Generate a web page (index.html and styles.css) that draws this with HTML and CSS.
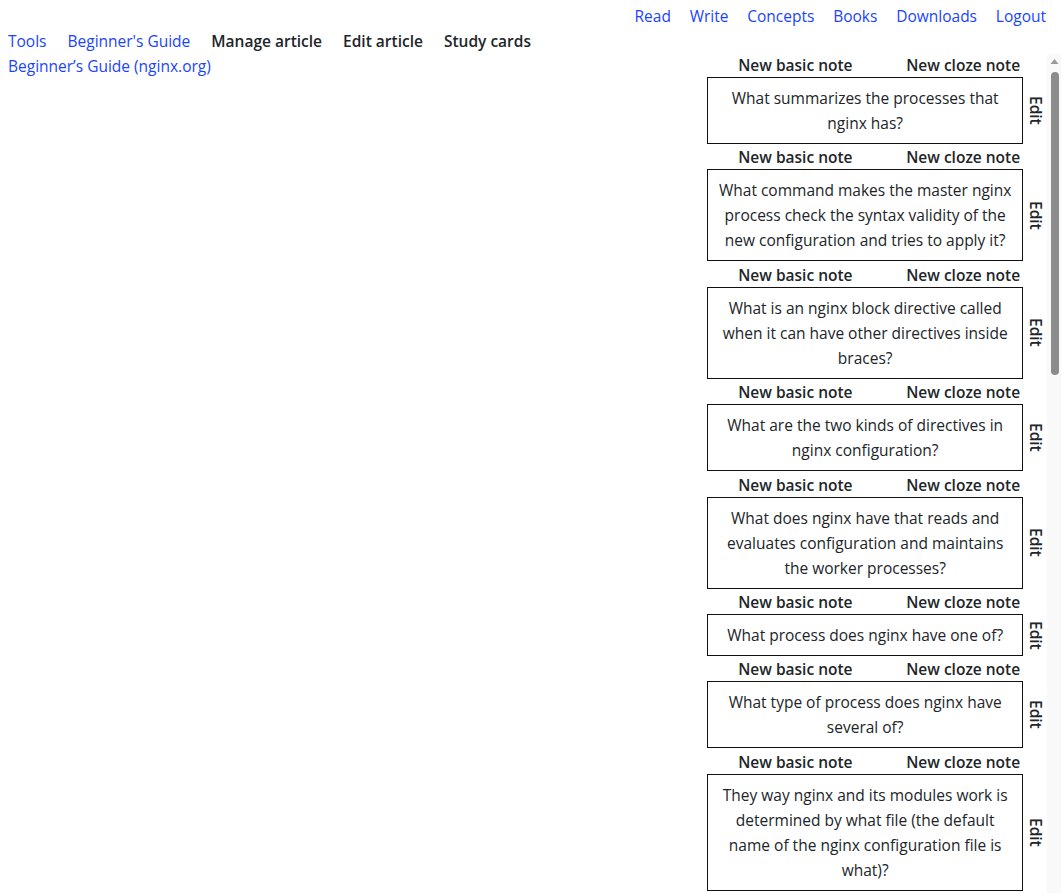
FILE: index.html
```html
<!DOCTYPE html>
<html lang="en">
<head>
<meta charset="utf-8">
<title>Beginner's Guide</title>
<link rel="stylesheet" href="styles.css">
</head>
<body>
<nav class="topnav">
  <a href="#">Read</a>
  <a href="#">Write</a>
  <a href="#">Concepts</a>
  <a href="#">Books</a>
  <a href="#">Downloads</a>
  <a href="#">Logout</a>
</nav>
<nav class="subnav">
  <a href="#">Tools</a>
  <a href="#">Beginner's Guide</a>
  <a href="#" class="strong">Manage article</a>
  <a href="#" class="strong">Edit article</a>
  <a href="#" class="strong">Study cards</a>
</nav>
<main class="main">
  <section class="article">
    <a href="#">Beginner’s Guide (nginx.org)</a>
  </section>
  <aside class="panel">
    <div class="panel-content">
      <div class="note"><div class="note-head"><a href="#">New basic note</a><a href="#">New cloze note</a></div><div class="note-row"><div class="card">What summarizes the processes that nginx has?</div><a href="#" class="edit">Edit</a></div></div>
      <div class="note"><div class="note-head"><a href="#">New basic note</a><a href="#">New cloze note</a></div><div class="note-row"><div class="card">What command makes the master nginx process check the syntax validity of the new configuration and tries to apply it?</div><a href="#" class="edit">Edit</a></div></div>
      <div class="note"><div class="note-head"><a href="#">New basic note</a><a href="#">New cloze note</a></div><div class="note-row"><div class="card">What is an nginx block directive called when it can have other directives inside braces?</div><a href="#" class="edit">Edit</a></div></div>
      <div class="note"><div class="note-head"><a href="#">New basic note</a><a href="#">New cloze note</a></div><div class="note-row"><div class="card">What are the two kinds of directives in nginx configuration?</div><a href="#" class="edit">Edit</a></div></div>
      <div class="note"><div class="note-head"><a href="#">New basic note</a><a href="#">New cloze note</a></div><div class="note-row"><div class="card">What does nginx have that reads and evaluates configuration and maintains the worker processes?</div><a href="#" class="edit">Edit</a></div></div>
      <div class="note"><div class="note-head"><a href="#">New basic note</a><a href="#">New cloze note</a></div><div class="note-row"><div class="card">What process does nginx have one of?</div><a href="#" class="edit">Edit</a></div></div>
      <div class="note"><div class="note-head"><a href="#">New basic note</a><a href="#">New cloze note</a></div><div class="note-row"><div class="card">What type of process does nginx have several of?</div><a href="#" class="edit">Edit</a></div></div>
      <div class="note"><div class="note-head"><a href="#">New basic note</a><a href="#">New cloze note</a></div><div class="note-row"><div class="card">They way nginx and its modules work is determined by what file (the default name of the nginx configuration file is what)?</div><a href="#" class="edit">Edit</a></div></div>
    </div>
    <div class="scrollbar" aria-hidden="true">
      <svg class="scroll-arrow" width="14" height="16" viewBox="0 0 14 16"><path d="M3.5 10 L7.5 5 L11.5 10 Z" fill="#9a9a9a"/></svg>
      <div class="scroll-thumb"></div>
    </div>
  </aside>
</main>
</body>
</html>
```

FILE: styles.css
```css
html, body {
  margin: 0;
  padding: 0;
  height: 100%;
  overflow: hidden;
}

body {
  font-family: "Open Sans", "Noto Sans", sans-serif;
  font-size: 15.5px;
  line-height: 25px;
  color: #212529;
  background: #ffffff;
  padding-top: 4px;
  box-sizing: border-box;
}

a {
  color: #1a44ff;
  text-decoration: none;
}

.topnav {
  display: flex;
  justify-content: flex-end;
  gap: 18.8px;
  padding-right: 15px;
  height: 25px;
}

.subnav {
  display: flex;
  gap: 21px;
  padding-left: 8px;
  height: 25px;
}

.subnav .strong {
  color: #212529;
  font-weight: 600;
}

.main {
  display: flex;
  height: calc(100vh - 54px);
}

.article {
  flex: 1;
  padding-left: 8px;
}

.panel {
  width: 33.3333%;
  height: 100%;
  display: flex;
}

.panel-content {
  flex: 1;
  min-width: 0;
  overflow: hidden;
}

.note + .note {
  margin-top: 2.4px;
}

.note-head {
  display: flex;
  justify-content: space-around;
  line-height: 23px;
  padding-left: 4px;
}

.note-head a {
  color: #212529;
  font-weight: 600;
}

.note-row {
  display: flex;
}

.card {
  flex: 1;
  border: 1px solid #111111;
  padding: 8px 8px 7px;
  text-align: center;
}

.edit {
  width: 24px;
  display: flex;
  align-items: center;
  justify-content: center;
  writing-mode: vertical-rl;
  color: #212529;
  font-weight: 600;
}

.scrollbar {
  width: 14px;
  background: #f9f9f9;
  display: flex;
  flex-direction: column;
}

.scroll-arrow {
  display: block;
  flex: none;
}

.scroll-thumb {
  width: 8px;
  height: 303px;
  margin: 2px 0 0 4px;
  background: #8c8c8c;
  border-radius: 4px;
}
```
